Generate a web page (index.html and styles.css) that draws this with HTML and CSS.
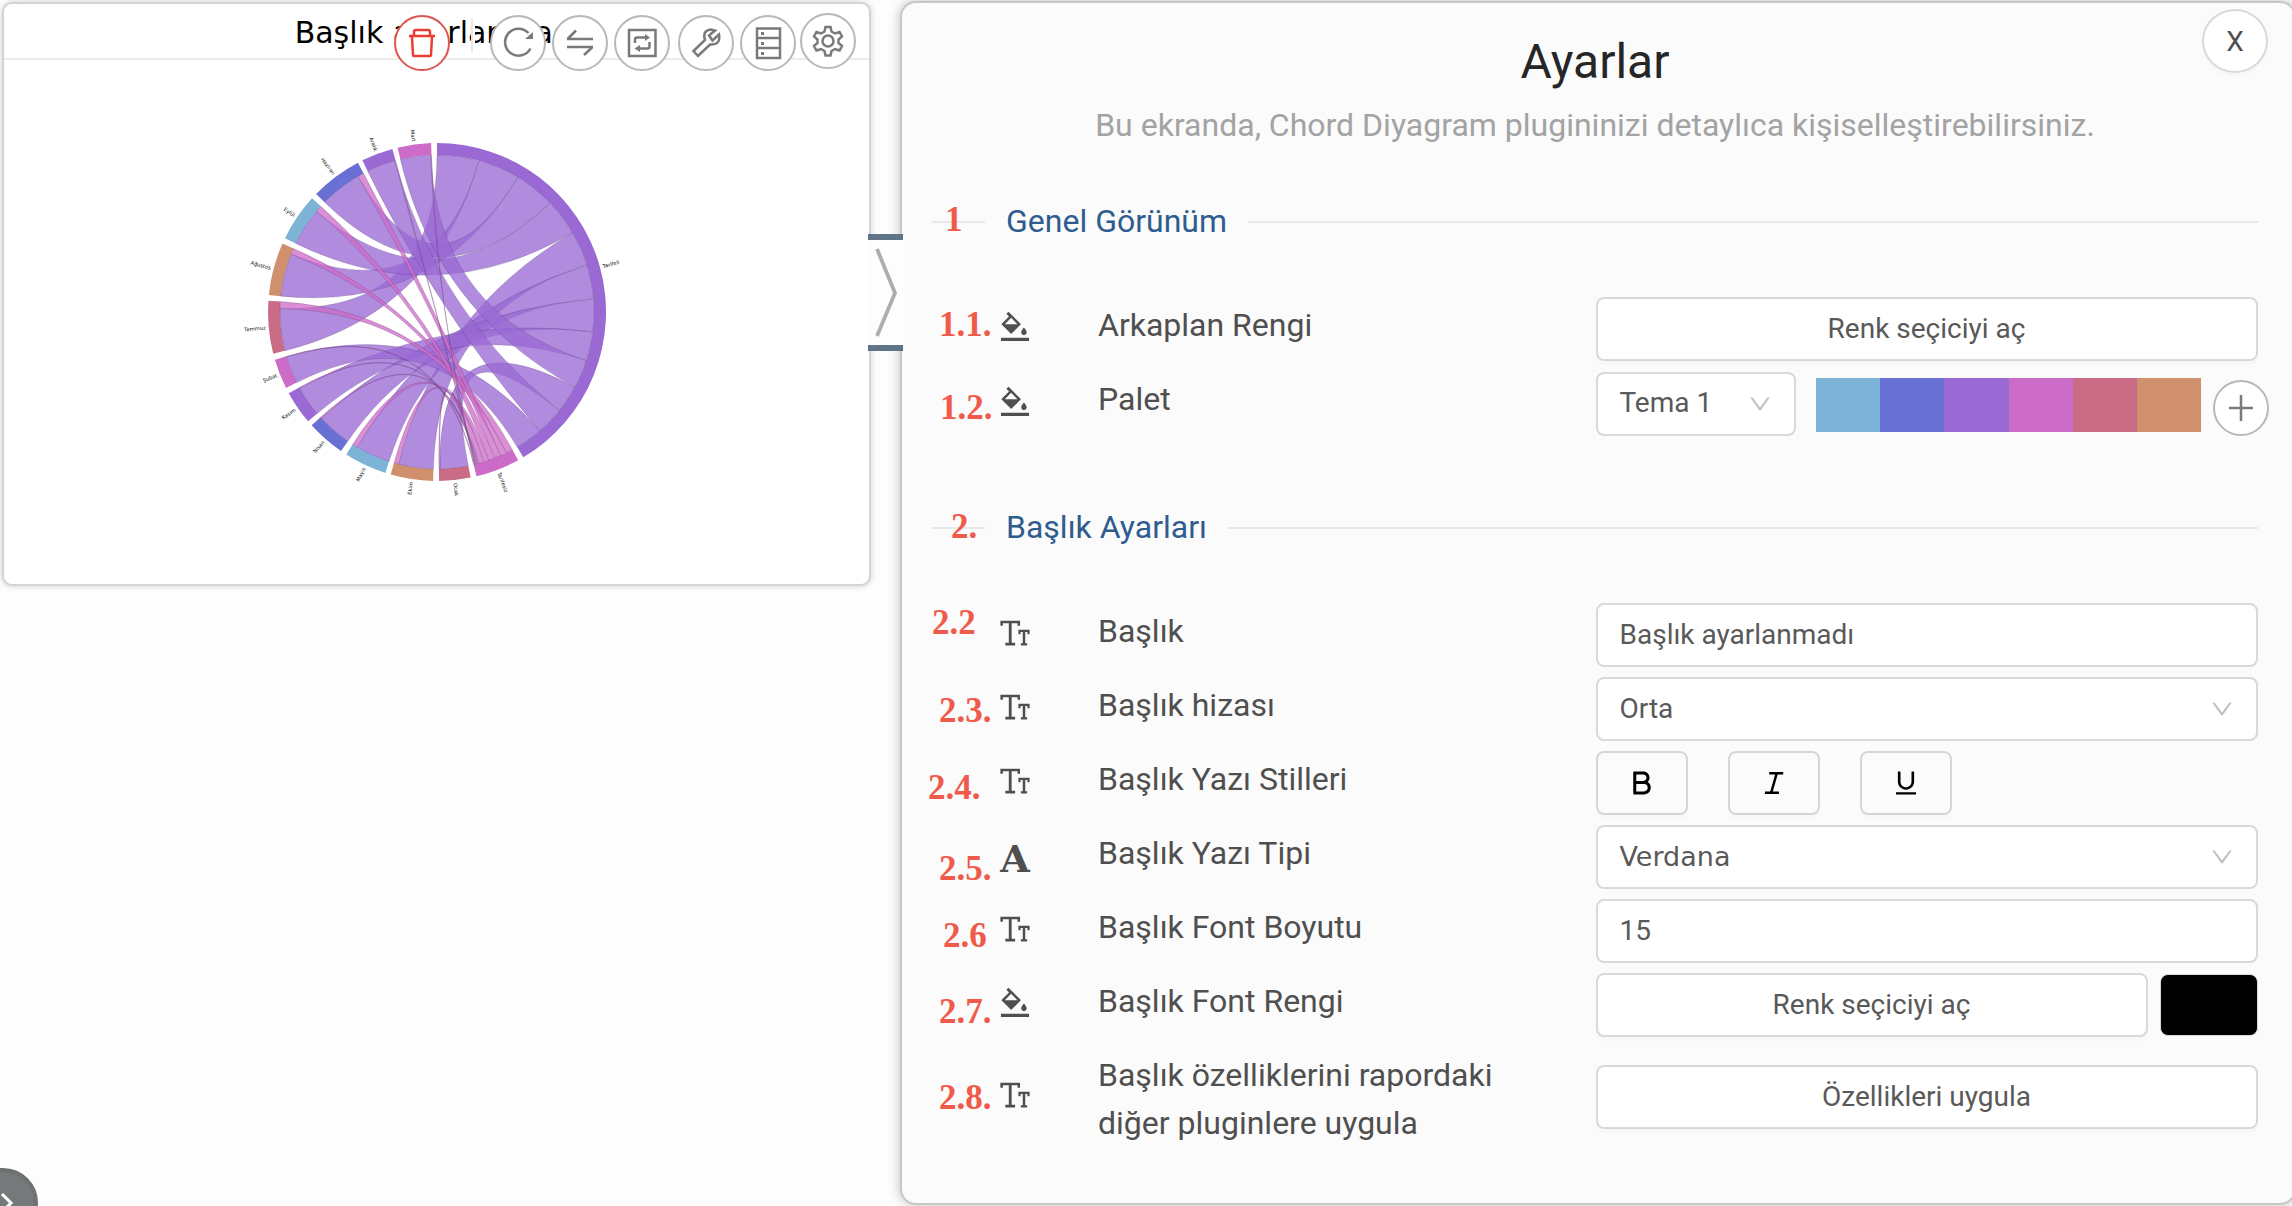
FILE: index.html
```html
<!DOCTYPE html>
<html lang="tr">
<head>
<meta charset="utf-8">
<title>Ayarlar</title>
<link rel="stylesheet" href="styles.css">
</head>
<body>
<svg class="defs" aria-hidden="true">
  <symbol id="fill" viewBox="0 0 1024 1024"><path d="M766.4 744.3c43.7 0 79.4-36.2 79.4-80.5 0-53.5-79.4-140.8-79.4-140.8S687 610.3 687 663.8c0 44.3 35.7 80.5 79.4 80.5zm-377.1-44.1c7.1 7.1 18.6 7.1 25.6 0l256.1-256c7.1-7.1 7.1-18.6 0-25.6l-256-256c-.6-.6-1.3-1.2-2-1.7l-78.2-78.2a9.11 9.11 0 0 0-12.8 0l-48 48a9.11 9.11 0 0 0 0 12.8l67.2 67.2-207.8 207.9c-7.1 7.1-7.1 18.6 0 25.6l255.9 256zm12.9-448.6l178.9 178.9H223.4l178.8-178.9zM904 816H120c-4.4 0-8 3.6-8 8v80c0 4.4 3.6 8 8 8h784c4.4 0 8-3.6 8-8v-80c0-4.4-3.6-8-8-8z"/></symbol>
  <symbol id="size" viewBox="0 0 1024 1024"><path d="M920 416H616c-4.4 0-8 3.6-8 8v112c0 4.4 3.6 8 8 8h48c4.4 0 8-3.6 8-8v-56h60v320h-46c-4.4 0-8 3.6-8 8v48c0 4.4 3.6 8 8 8h164c4.4 0 8-3.6 8-8v-48c0-4.4-3.6-8-8-8h-46V480h60v56c0 4.4 3.6 8 8 8h48c4.4 0 8-3.6 8-8V424c0-4.4-3.6-8-8-8zM656 296V168c0-4.4-3.6-8-8-8H104c-4.4 0-8 3.6-8 8v128c0 4.4 3.6 8 8 8h56c4.4 0 8-3.6 8-8v-64h168v560h-92c-4.4 0-8 3.6-8 8v56c0 4.4 3.6 8 8 8h264c4.4 0 8-3.6 8-8v-56c0-4.4-3.6-8-8-8h-92V232h168v64c0 4.4 3.6 8 8 8h56c4.4 0 8-3.6 8-8z"/></symbol>
  <symbol id="down" viewBox="0 0 1024 1024"><path d="M884 256h-75c-5.1 0-9.9 2.5-12.9 6.6L512 654.2 227.9 262.6c-3-4.1-7.8-6.6-12.9-6.6h-75c-6.5 0-10.3 7.4-6.5 12.7l352.6 486.1c12.8 17.6 39 17.6 51.7 0l352.6-486.1c3.9-5.3.1-12.7-6.4-12.7z"/></symbol>
</svg>

<main class="screen">
  <section class="card">
    <header class="card-head">Başlık ayarlanmadı</header>
    <div class="toolbar">
      <button class="tool danger"><svg viewBox="0 0 56 56"><path d="M15 21H41M20 20V17Q20 15 22 15H34Q36 15 36 17V20M18 22L19 40Q19 41 20 41H36Q37 41 37 40L38 22"/></svg></button>
      <span class="divider"></span>
      <button class="tool refresh"><svg viewBox="0 0 56 56"><path d="M40.5 33.5A13.5 13.5 0 1 1 38.5 18"/><path class="solid" d="M43 17V24H35Z"/></svg></button>
      <button class="tool"><svg viewBox="0 0 56 56"><path d="M15 24H41M15.500 24L24 15.500M15 32H41M40.500 32L32 40"/></svg></button>
      <button class="tool"><svg viewBox="0 0 56 56"><path d="M15 15H41.500V41H15ZM21 28V24.500Q21 22.500 23 22.500H32M35.500 27V31.500Q35.500 33.500 33.500 33.500H25"/><path class="solid" d="M31 19V26L36 22.500ZM26 30V37L20.500 33.500Z"/></svg></button>
      <button class="tool wrench"><svg viewBox="0 0 56 56"><path d="M15.500 36L27 25Q24 15.500 33 14.500L37 15.500L31 20.500L34.500 25.500L41 19.500Q43 30 32 29.500L20 41Z"/></svg></button>
      <button class="tool"><svg viewBox="0 0 56 56"><path d="M17 13.500H40V43H17ZM17 23H40M17 33H40"/><path class="solid" d="M21 17h3v3h-3zM21 27h3v3h-3zM21 37h3v3h-3z"/></svg></button>
      <button class="tool gear"><svg viewBox="0 0 56 56"><circle cx="28" cy="28" r="5.500"/><path d="M25.500 14H30.500L31.500 18.500L35 20.500L39.500 19L42 23.500L38.500 26.500V30L42 33L39.500 37.500L35 36L31.500 38L30.500 42.500H25.500L24.500 38L21 36L16.500 37.500L14 33L17.500 30V26.500L14 23.500L16.500 19L21 20.500L24.500 18.500Z"/></svg></button>
    </div>
    <svg class="chord" id="chord" viewBox="-200 -200 400 400"></svg>
  </section>

  <div class="handle"><svg viewBox="0 0 35 105"><path d="M9 9L27 53L9 96"/></svg></div>

  <section class="panel">
    <button class="close">X</button>
    <h1 class="title">Ayarlar</h1>
    <p class="subtitle">Bu ekranda, Chord Diyagram plugininizi detaylıca kişiselleştirebilirsiniz.</p>

    <h2 class="heading first"><b class="num n1">1</b><span>Genel Görünüm</span></h2>
    <div class="rows">
      <div class="row"><b class="num n11">1.1.</b><svg class="icon"><use href="#fill"/></svg><span class="label">Arkaplan Rengi</span><button class="btn">Renk seçiciyi aç</button></div>
      <div class="row"><b class="num n12">1.2.</b><svg class="icon"><use href="#fill"/></svg><span class="label">Palet</span>
        <div class="palette-row">
          <div class="field theme">Tema 1<svg class="arrow"><use href="#down"/></svg></div>
          <div class="palette"><i class="c1"></i><i class="c2"></i><i class="c3"></i><i class="c4"></i><i class="c5"></i><i class="c6"></i></div>
          <button class="add"><svg viewBox="0 0 56 56"><path d="M16 28H40M28 15V41"/></svg></button>
        </div>
      </div>
    </div>

    <h2 class="heading second"><b class="num n2">2.</b><span>Başlık Ayarları</span></h2>
    <div class="rows">
      <div class="row"><b class="num n22">2.2</b><svg class="icon"><use href="#size"/></svg><span class="label">Başlık</span><div class="field">Başlık ayarlanmadı</div></div>
      <div class="row"><b class="num n23">2.3.</b><svg class="icon"><use href="#size"/></svg><span class="label">Başlık hizası</span><div class="field">Orta<svg class="arrow"><use href="#down"/></svg></div></div>
      <div class="row"><b class="num n24">2.4.</b><svg class="icon"><use href="#size"/></svg><span class="label">Başlık Yazı Stilleri</span>
        <div class="styles">
          <button class="style"><svg viewBox="0 0 1024 1024"><path d="M697.8 481.4c33.6-35 54.2-82.3 54.2-134.3v-10.2C752 229.3 663.900 142 555.300 142H259.400c-15.100 0-27.400 12.300-27.400 27.400v679.100c0 16.300 13.200 29.500 29.500 29.500h318.700c117 0 211.800-94.200 211.800-210.500v-11c0-73-37.400-137.300-94.200-175.100zM328 238h224.700c57.100 0 103.300 44.400 103.300 99.300v9.400c0 54.800-46.300 99.300-103.300 99.300H328V238zm366.600 429.400c0 63.400-51.800 114.600-115.900 114.600H328V542h250.700c64.100 0 115.900 51.200 115.900 114.600v10.800z"/></svg></button>
          <button class="style"><svg viewBox="0 0 1024 1024"><path d="M798 160H366c-4.400 0-8 3.600-8 8v64c0 4.400 3.600 8 8 8h181.200l-156 544H229c-4.400 0-8 3.600-8 8v64c0 4.400 3.600 8 8 8h432c4.400 0 8-3.600 8-8v-64c0-4.400-3.600-8-8-8H474.400l156-544H798c4.400 0 8-3.600 8-8v-64c0-4.400-3.600-8-8-8z"/></svg></button>
          <button class="style"><svg viewBox="0 0 1024 1024"><path d="M824 804H200c-4.400 0-8 3.400-8 7.600v60.800c0 4.200 3.600 7.600 8 7.600h624c4.400 0 8-3.400 8-7.600v-60.800c0-4.200-3.600-7.600-8-7.600zm-312-76c69.400 0 134.600-27.100 183.800-76.200C745 602.700 772 537.400 772 468V156c0-6.600-5.400-12-12-12h-60c-6.600 0-12 5.400-12 12v312c0 97-79 176-176 176s-176-79-176-176V156c0-6.600-5.400-12-12-12h-60c-6.600 0-12 5.400-12 12v312c0 69.400 27.100 134.600 76.200 183.800C377.300 701 442.600 728 512 728z"/></svg></button>
        </div>
      </div>
      <div class="row"><b class="num n25">2.5.</b><span class="icon letter">A</span><span class="label">Başlık Yazı Tipi</span><div class="field verdana">Verdana<svg class="arrow"><use href="#down"/></svg></div></div>
      <div class="row"><b class="num n26">2.6</b><svg class="icon"><use href="#size"/></svg><span class="label">Başlık Font Boyutu</span><div class="field">15</div></div>
      <div class="row"><b class="num n27">2.7.</b><svg class="icon"><use href="#fill"/></svg><span class="label">Başlık Font Rengi</span>
        <div class="color-row"><button class="btn">Renk seçiciyi aç</button><span class="swatch"></span></div>
      </div>
      <div class="row tall"><b class="num n28">2.8.</b><svg class="icon"><use href="#size"/></svg><span class="label">Başlık özelliklerini rapordaki<br>diğer pluginlere uygula</span><button class="btn">Özellikleri uygula</button></div>
    </div>
  </section>

  <button class="drawer"><svg viewBox="0 0 70 70"><path d="M34 26L43 35L34 44"/></svg></button>
</main>
<script src="chord.js"></script>
</body>
</html>
```
FILE: styles.css
```css
* { box-sizing: border-box; }
body { margin: 0; background: #fdfdfd; font-family: Roboto, "Liberation Sans", sans-serif; color: #4f4f4f; }
button { font: inherit; color: inherit; padding: 0; margin: 0; display: flex; align-items: center; justify-content: center; }
.defs { display: none; }
.screen { position: relative; width: 2292px; height: 1206px; overflow: hidden; display: flex; align-items: flex-start; }

.card { position: relative; flex: none; width: 869px; height: 584px; margin: 2px 0 0 2px; background: #fff; border: 2px solid #d4d4d4; border-radius: 10px; box-shadow: 0 0 6px rgba(0,0,0,.18); }
.card-head { height: 56px; padding: 1px 0 0 2px; border-bottom: 2px solid #ececec; text-align: center; color: #000; font: 30px/55px "DejaVu Sans", sans-serif; }
.chord { display: block; width: 400px; height: 400px; margin: 52px 0 0 233px; }
.chord text { font: 5.2px "DejaVu Sans", sans-serif; fill: #111; }

.toolbar { position: absolute; left: 390px; top: 11px; display: flex; align-items: flex-start; gap: 6px; }
.tool { width: 56px; height: 56px; border: 2px solid #b8b8b8; border-radius: 50%; background: #fff; }
.tool svg { width: 56px; height: 56px; flex: none; fill: none; stroke: #7a7a7a; stroke-width: 2.5; }
.tool .solid { fill: #7a7a7a; stroke: none; }
.tool.danger { border-color: #db5653; }
.tool.danger svg { stroke: #ea3d33; }
.divider { width: 4px; height: 34px; margin: 3px 5px 0 15px; background: #fff; border-left: 2px solid #e8e8e8; }
.tool.refresh { margin-left: 4px; }
.tool.wrench { margin-left: 2px; }
.tool.gear { margin: -2px 0 0 -2px; }

.handle { flex: none; width: 35px; height: 117px; margin: 234px 0 0 -3px; background: #fdfdfd; border: solid #607487; border-width: 6px 0; position: relative; z-index: 2; }
.handle svg { display: block; width: 35px; height: 105px; fill: none; stroke: #adadad; stroke-width: 3.8; }

.panel { position: relative; flex: none; width: 1396px; height: 1204px; margin: 1px 0 0 -3px; padding: 23px 36px 0 30px; background: #fbfbfb; border: 2px solid #c6c8c8; border-radius: 16px; box-shadow: 0 0 12px rgba(0,0,0,.25); }
.close { position: absolute; top: 6px; left: 1300px; width: 66px; height: 64px; border: 2px solid #d9d9d9; border-radius: 50%; background: #fff; font-size: 28px; box-shadow: 0 4px 0 rgba(0,0,0,.015); }
.title { margin: 0 0 3px; text-align: center; font-size: 48px; line-height: 72px; font-weight: 400; color: #262626; }
.subtitle { margin: 0; text-align: center; font-size: 32px; line-height: 48px; color: #a3a3a3; }

.heading { position: relative; display: flex; align-items: center; gap: 21px; width: 1326px; height: 48px; margin: 49px 0 51px; font-size: 32px; line-height: 46px; font-weight: 400; color: #2f5c8f; }
.heading span { padding-bottom: 2px; }
.heading.second { margin-top: 69px; }
.heading::before, .heading::after { content: ""; height: 2px; background: #e8e8e8; width: 53px; }
.heading::after { flex: 1; width: auto; }

.num { position: absolute; left: 7px; top: 0; font: bold 35px/40px "Liberation Serif", serif; color: #f05a4a; }
.n1 { left: 13px; top: 2px; }
.n11 { top: 8px; } .n12 { left: 8px; top: 17px; }
.n2 { left: 19px; top: 3px; }
.n22 { left: 0; top: 0; } .n23 { top: 14px; } .n24 { left: -4px; top: 17px; } .n25 { top: 24px; }
.n26 { left: 11px; top: 17px; } .n27 { top: 19px; } .n28 { top: 31px; }

.rows { display: flex; flex-direction: column; gap: 10px; }
.row { position: relative; display: grid; grid-template-columns: 101px 497.500px 662px; align-items: center; height: 64px; padding-left: 65px; }
.row.tall { height: 98px; }
.icon { width: 36px; height: 36px; margin-bottom: 4px; fill: #4f4f4f; }
.letter { font: bold 38px/36px "DejaVu Serif", serif; text-align: center; margin: 3px 0 0; }
.label { align-self: start; padding-top: 4px; font-size: 32px; line-height: 48px; white-space: nowrap; }
.btn { width: 100%; height: 64px; border: 2px solid #d9d9d9; border-radius: 8px; background: #fff; padding-bottom: 2px; font-size: 28px; color: #595959; box-shadow: 0 4px 0 rgba(0,0,0,.015); }
.field { display: flex; align-items: center; justify-content: space-between; height: 64px; border: 2px solid #d9d9d9; border-radius: 8px; background: #fff; padding: 0 21px 2px 22px; font-size: 28px; color: #595959; }
.arrow { width: 26px; height: 26px; fill: #bfbfbf; margin-top: 2px; }
.verdana { font-family: "DejaVu Sans", sans-serif; font-size: 27px; }
.palette-row { display: flex; align-items: center; width: 674px; }
.theme { width: 200.500px; }
.palette { display: flex; width: 385px; height: 54px; margin: 2px 12px 0 20px; }
.palette i { flex: 1; }
.c1 { background: #7cb3d7; } .c2 { background: #6870d3; } .c3 { background: #9a69d4; }
.c4 { background: #cd6cc8; } .c5 { background: #cb6c86; } .c6 { background: #d08f6d; }
.add { width: 56px; height: 56px; margin-top: 9px; border: 2px solid #b8b8b8; border-radius: 50%; background: #fff; }
.add svg { flex: none; width: 56px; height: 56px; stroke: #7a7a7a; stroke-width: 2.5; }
.styles { display: flex; gap: 40px; }
.style { width: 92px; height: 64px; border: 2px solid #d5d5d5; border-radius: 8px; background: #fbfbfb; box-shadow: 0 4px 0 rgba(0,0,0,.015); }
.style svg { width: 32px; height: 32px; fill: #000; }
.color-row { display: flex; gap: 12px; }
.color-row .btn { width: 552px; }
.swatch { width: 98px; height: 62px; margin-top: 1px; background: #000; border: 1px solid #d9d9d9; border-radius: 8px; }

.drawer { position: absolute; left: -32px; top: 1168px; width: 70px; height: 70px; border: 4px solid #6e7071; border-radius: 50%; background: #76797a; }
.drawer svg { flex: none; width: 70px; height: 70px; fill: none; stroke: #fff; stroke-width: 3; }
```
FILE: chord.js
```javascript
// Arc angles are in degrees, clockwise from twelve o'clock.
const OUTER = 169, INNER = 157;
const blue = '#7cb3d7', indigo = '#6870d3', purple = '#9a69d4', pink = '#cd6cc8', rose = '#cb6c86', orange = '#d08f6d';
const groups = {
  'Tarifeli': [0, 149.3, purple], 'Tarifesiz': [151.3, 166.5, pink],
  'Ocak': [168.5, 179.3, rose], 'Ekim': [181.3, 195.9, orange], 'Mayıs': [197.8, 212.5, blue],
  'Nisan': [214.6, 227.9, indigo], 'Kasım': [229.7, 241.3, purple], 'Şubat': [243.3, 253.6, pink],
  'Temmuz': [255.7, 273.8, rose], 'Ağustos': [275.8, 293.9, orange], 'Eylül': [295.9, 312.3, blue],
  'Haziran': [314.3, 332.1, indigo], 'Aralık': [333.8, 344.7, purple], 'Mart': [346.5, 358, pink]
};
const minor = { 'Temmuz': 2.5, 'Ağustos': 2.3, 'Haziran': 2.3, 'Eylül': 2.4, 'Mayıs': 1.9, 'Ekim': 1.8,
  'Nisan': .45, 'Kasım': .35, 'Ocak': .4, 'Aralık': .3, 'Mart': .3, 'Şubat': .2 };
const major = [['Temmuz', 15.5], ['Ağustos', 31], ['Haziran', 46], ['Eylül', 59.7], ['Ekim', 72.6], ['Mayıs', 85.2],
  ['Nisan', 97.3], ['Kasım', 108], ['Mart', 118.6], ['Ocak', 128.9], ['Aralık', 139.1], ['Şubat', 149.3]];

const svg = document.getElementById('chord');
const add = (tag, attrs, text) => {
  const el = document.createElementNS('http://www.w3.org/2000/svg', tag);
  for (const k in attrs) el.setAttribute(k, attrs[k]);
  if (text) el.textContent = text;
  svg.appendChild(el);
};
const pt = (a, r) => {
  const t = a * Math.PI / 180;
  return (r * Math.sin(t)).toFixed(2) + ',' + (-r * Math.cos(t)).toFixed(2);
};
const arc = (a, b, r, sweep) => `A${r},${r} 0 ${b - a > 180 ? 1 : 0} ${sweep} `;

for (const name in groups) {
  const [a, b, fill] = groups[name];
  add('path', { fill, d: `M${pt(a, OUTER)}${arc(a, b, OUTER, 1)}${pt(b, OUTER)}L${pt(b, INNER)}${arc(a, b, INNER, 0)}${pt(a, INNER)}Z` });
  const mid = (a + b) / 2, left = mid > 180;
  add('text', {
    transform: `rotate(${mid - 90}) translate(172 0)${left ? ' rotate(180)' : ''}`,
    'text-anchor': left ? 'end' : 'start', dy: '.35em'
  }, name);
}

const ribbon = (a, b, c, d, fill) => add('path', {
  fill, 'fill-opacity': .77, stroke: '#302050', 'stroke-opacity': .38, 'stroke-width': .5,
  d: `M${pt(a, INNER)}${arc(a, b, INNER, 1)}${pt(b, INNER)}Q0,0 ${pt(c, INNER)}${arc(c, d, INNER, 1)}${pt(d, INNER)}Q0,0 ${pt(a, INNER)}Z`
});
let from = 0;
for (const [name, to] of major) {
  ribbon(from, to, groups[name][0], groups[name][1] - minor[name], purple);
  from = to;
}
from = 151.3;
for (const name in minor) {
  const end = groups[name][1];
  ribbon(from, from + minor[name], end - minor[name], end, pink);
  from += minor[name];
}
```
